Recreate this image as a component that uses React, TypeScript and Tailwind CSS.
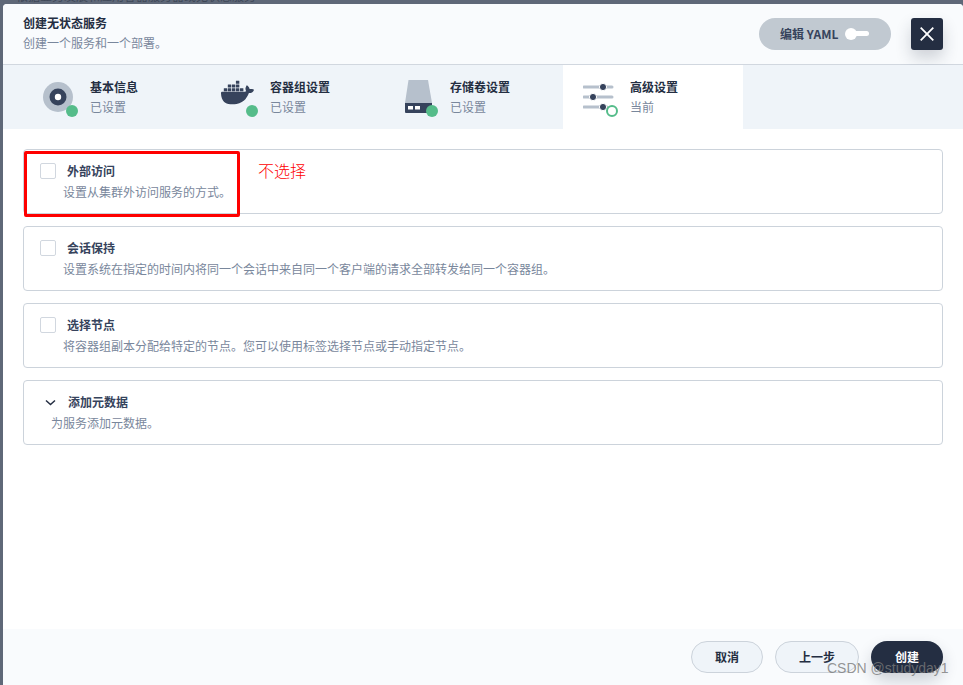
import React from "react";
import { SiDocker } from "react-icons/si";

const FONT = '"Noto Sans CJK SC", Roboto, "Liberation Sans", sans-serif';

function Dot({ className }: { className: string }) {
  return <span className={`absolute h-3 w-3 rounded-full bg-[#55bc8a] ${className}`} />;
}

function Step({ icon, title, sub, width, active }: { icon: React.ReactNode; title: string; sub: string; width: string; active?: boolean }) {
  return (
    <div className={`flex h-full items-center ${width} ${active ? "bg-white" : ""}`}>
      {icon}
      <div className="mb-[1px] ml-[10px] flex flex-col">
        <span className="text-[12px] font-bold leading-[20px] text-[#242e42]">{title}</span>
        <span className="text-[12px] leading-[19px] text-[#79879c]">{sub}</span>
      </div>
    </div>
  );
}

function Card({ title, desc, chevron }: { title: string; desc: string; chevron?: boolean }) {
  return (
    <div className="h-[65px] rounded-[4px] border border-[#ccd3db] bg-white pl-[16px]">
      <div className="mt-[11px] flex h-[20px] items-center">
        {chevron ? (
          <svg width="16" height="16" viewBox="0 0 16 16" className="ml-[2px] mr-[10px]">
            <path d="M4 6.5 L8.5 10.5 L13 6.5" fill="none" stroke="#242e42" strokeWidth="1.5" />
          </svg>
        ) : (
          <span className="mr-[11px] h-[16px] w-[16px] rounded-[2px] border border-[#d1d7df] bg-white" />
        )}
        <span className="text-[12px] font-bold leading-[20px] text-[#36435c]">{title}</span>
      </div>
      <div className={`mt-[1px] text-[12px] leading-[20px] text-[#79879c] ${chevron ? "pl-[11px]" : "pl-[23px]"}`}>{desc}</div>
    </div>
  );
}

export default function App() {
  return (
    <div className="relative flex h-[685px] w-[963px] flex-col overflow-hidden bg-[#5f6878] pl-[3px] pt-[4px]" style={{ fontFamily: FONT }}>
      <div className="absolute left-[16px] top-[-11px] whitespace-nowrap text-[12px] leading-[14px] text-[#3e4757]">根据业务发展和应用容器服务器或无状态服务</div>

      <div className="relative flex min-h-0 flex-1 flex-col overflow-hidden rounded-tl-[4px] rounded-tr-[4px] bg-white">
        <header className="flex h-[61px] shrink-0 items-center border-b border-[#d1d7df] bg-[#f9fbfd] pb-[1px] pl-[20px] pr-[20px]">
          <div className="mb-[2px] flex flex-col">
            <span className="text-[12px] font-bold leading-[20px] text-[#242e42]">创建无状态服务</span>
            <span className="text-[12px] leading-[20px] text-[#79879c]">创建一个服务和一个部署。</span>
          </div>
          <div className="ml-auto flex h-[32px] w-[132px] items-center rounded-[16px] bg-[#c1c9d1] pl-[21px]">
            <span className="text-[12px] font-bold leading-[20px] text-[#36435c]">编辑 YAML</span>
            <span className="relative ml-[7px] h-[8px] w-[24px]">
              <span className="absolute left-[2px] top-[1.5px] h-[5px] w-[22px] rounded-full bg-white" />
              <span className="absolute left-0 top-[-2px] h-[12px] w-[12px] rounded-full bg-white" />
            </span>
          </div>
          <button className="ml-[20px] flex h-[32px] w-[32px] items-center justify-center rounded-[3px] bg-[#242e42] shadow-[0_8px_16px_0_rgba(36,46,66,0.2)]">
            <svg width="16" height="16" viewBox="0 0 16 16">
              <path d="M1.7 1.7 L14.3 14.3 M14.3 1.7 L1.7 14.3" stroke="#fff" strokeWidth="1.8" fill="none" />
            </svg>
          </button>
        </header>

        <nav className="flex h-[64px] shrink-0 bg-[#eff4f9] pl-[35px]">
          <Step
            width="w-[179px]"
            title="基本信息"
            sub="已设置"
            icon={
              <span className="relative ml-[4px] mt-[4px] block h-[36px] w-[38px]">
                <svg width="32" height="32" viewBox="0 0 32 32" className="absolute left-0 top-0">
                  <circle cx="16" cy="16" r="15" fill="#b6c0cc" />
                  <circle cx="16" cy="16" r="8.5" fill="#36435c" />
                  <circle cx="16" cy="16" r="3.2" fill="#fff" />
                </svg>
                <Dot className="left-[24px] top-[24px]" />
              </span>
            }
          />
          <Step
            width="w-[187px]"
            title="容器组设置"
            sub="已设置"
            icon={
              <span className="relative ml-[4px] mt-[4px] block h-[36px] w-[39px]">
                <SiDocker className="absolute left-0 top-[-5px] h-[33px] w-[33px] text-[#36435c]" />
                <Dot className="left-[25px] top-[24px]" />
              </span>
            }
          />
          <Step
            width="w-[159px]"
            title="存储卷设置"
            sub="已设置"
            icon={
              <span className="relative mt-[4px] block h-[36px] w-[36px]">
                <svg width="36" height="36" viewBox="0 0 36 36" className="absolute left-0 top-[-1px]">
                  <path d="M4.5 0 H24 L28 23 H1 Z" fill="#b6c0cc" />
                  <path d="M1 23 H28 V33 H2 A1 1 0 0 1 1 32 Z" fill="#36435c" />
                  <rect x="4" y="26" width="5" height="3.5" fill="#fff" />
                  <rect x="11" y="26" width="5" height="3.5" fill="#fff" />
                </svg>
                <Dot className="left-[22px] top-[24px]" />
              </span>
            }
          />
          <Step
            active
            width="w-[180px] pl-[20px]"
            title="高级设置"
            sub="当前"
            icon={
              <span className="relative mt-[4px] block h-[36px] w-[37px]">
                <svg width="37" height="36" viewBox="0 0 37 36" className="absolute left-0 top-0">
                  <path d="M1 6 H29 M1 16 H29 M1 26 H24" stroke="#b6c0cc" strokeWidth="3" strokeLinecap="round" fill="none" />
                  <circle cx="20" cy="6" r="3.6" fill="#36435c" stroke="#fff" strokeWidth="1" />
                  <circle cx="10" cy="16" r="3.6" fill="#36435c" stroke="#fff" strokeWidth="1" />
                  <circle cx="20" cy="26" r="3.6" fill="#36435c" stroke="#fff" strokeWidth="1" />
                  <circle cx="29" cy="30" r="5" fill="#fff" stroke="#55bc8a" strokeWidth="2" />
                </svg>
              </span>
            }
          />
        </nav>

        <main className="flex min-h-0 flex-1 flex-col gap-[12px] bg-white px-[20px] pt-[20px]">
          <Card title="外部访问" desc="设置从集群外访问服务的方式。" />
          <Card title="会话保持" desc="设置系统在指定的时间内将同一个会话中来自同一个客户端的请求全部转发给同一个容器组。" />
          <Card title="选择节点" desc="将容器组副本分配给特定的节点。您可以使用标签选择节点或手动指定节点。" />
          <Card chevron title="添加元数据" desc="为服务添加元数据。" />
        </main>

        <footer className="flex h-[56px] shrink-0 items-start justify-end gap-[12px] bg-[#f9fbfd] pr-[20px] pt-[12px]">
          <button className="h-[32px] w-[72px] rounded-[16px] border border-[#ccd3db] bg-[#eff4f9] text-[12px] font-bold text-[#242e42]">取消</button>
          <button className="h-[32px] w-[84px] rounded-[16px] border border-[#ccd3db] bg-[#eff4f9] text-[12px] font-bold text-[#242e42]">上一步</button>
          <button className="h-[32px] w-[72px] rounded-[16px] bg-[#242e42] text-[12px] font-bold text-white shadow-[0_8px_16px_0_rgba(36,46,66,0.2)]">创建</button>
        </footer>
      </div>

      {/* annotations layered on the screenshot */}
      <div className="absolute left-[24px] top-[151px] h-[66px] w-[216px] rounded-[2px] border-[3px] border-[#fe0000]" />
      <div className="absolute left-[258px] top-[159px] text-[16px] font-light leading-[22px] text-[#fe0000]">不选择</div>
      <div className="absolute left-[827px] top-[658px] text-[14px] leading-[20px] text-[#7a7a7a]/80" style={{ fontFamily: '"Liberation Sans", sans-serif' }}>CSDN @studyday1</div>
    </div>
  );
}
